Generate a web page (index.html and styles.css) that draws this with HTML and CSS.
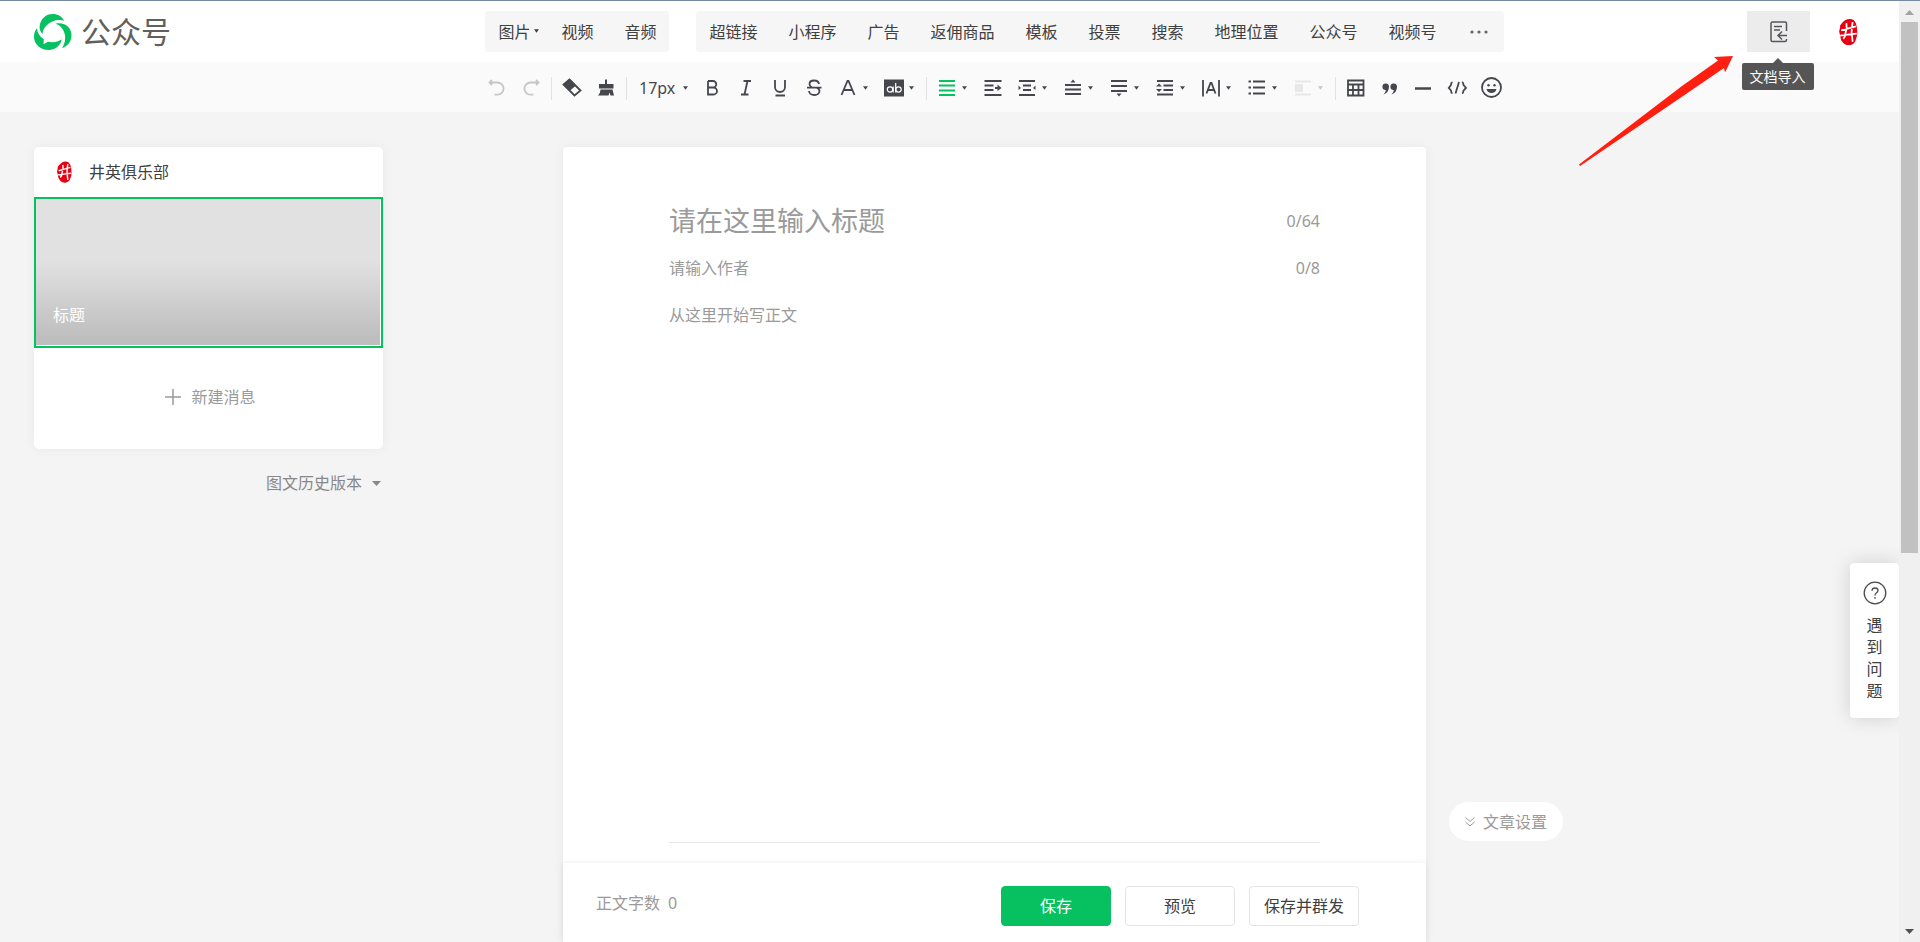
FILE: index.html
```html
<!DOCTYPE html>
<html lang="zh-CN">
<head>
  <meta charset="UTF-8">
  <meta name="viewport" content="width=device-width, initial-scale=1.0">
  <title>公众号</title>
  <link rel="stylesheet" href="styles.css">
</head>
<body>

  <!-- 公用图形 -->
  <svg class="defs" aria-hidden="true">
    <symbol id="arrow" viewBox="0 0 6 4"><path d="M0 0h6L3 4z" fill="currentColor"/></symbol>
    <symbol id="seal" viewBox="0 0 18 25">
      <path d="M6 1Q10-1 14 1Q17 4 17 8L17.500 13Q17.500 17 16 20Q15 24 11 25Q7 26 4 23Q1 20 1 16L0 12Q1 9 1 6Q3 3 6 1z" fill="#e60012"/>
      <path d="M7 4Q8 9 6 14Q6 17 4 19M13 3Q12 8 12 13L13 22M2 11L9 9L16 7M1 16L8 15L17 14" fill="none" stroke="#fff" stroke-width="1.7"/>
    </symbol>
  </svg>

  <div class="window">
    <div class="page">

      <!-- 顶部 -->
      <header class="header">
        <a href="#" class="brand">
          <svg width="38" height="36" viewBox="0 0 38 36" fill="#07c160">
            <path d="M8.500 20C6 17.500 5.200 14.500 5.700 11.500C7 4.500 12 0 18.500 0C24 0 28 2.600 30.200 6.700C27 5.600 22.500 5.700 18.500 7.500C12.500 10.200 9 14.500 8.500 20z"/>
            <path d="M21.500 9.700C30.500 7.500 37.500 13.500 37.500 21C37.500 27.500 34 32 28 34.200C30.500 30 31.700 26 31 21.500C30 15.500 26.500 11 21.500 9.700z"/>
            <path d="M3 14.200C3.200 18.500 5.500 22.500 9.800 25.200L9.500 30.200L14 27.700C19 28.700 24 28 27.700 25.300C26.500 32 21.500 36 14.500 36C6.500 36 0 30.500 0 22.500C0 19.200 1 16.500 3 14.200z"/>
          </svg>
          <span>公众号</span>
        </a>

        <nav class="nav">
          <div class="nav-group">
            <button type="button">图片<svg width="5" height="4"><use href="#arrow"/></svg></button>
            <button type="button">视频</button>
            <button type="button">音频</button>
          </div>
          <div class="nav-group">
            <button type="button">超链接</button>
            <button type="button">小程序</button>
            <button type="button">广告</button>
            <button type="button">返佣商品</button>
            <button type="button">模板</button>
            <button type="button">投票</button>
            <button type="button">搜索</button>
            <button type="button">地理位置</button>
            <button type="button">公众号</button>
            <button type="button">视频号</button>
            <button type="button" class="more" aria-label="更多">
              <svg width="18" height="4" viewBox="0 0 18 4" fill="#666"><circle cx="2" cy="2" r="1.600"/><circle cx="9" cy="2" r="1.600"/><circle cx="16" cy="2" r="1.600"/></svg>
            </button>
          </div>
        </nav>

        <div class="user">
          <div class="import">
            <button type="button" class="import-btn" aria-label="文档导入">
              <svg width="18" height="22" viewBox="0 0 18 22" fill="none" stroke="#55565c" stroke-width="1.500">
                <path d="M16.500 10V2.500Q16.500 1 15 1H2.500Q1 1 1 2.500V19Q1 20.500 2.500 20.500H15Q16.500 20.500 16.500 19V18M4 5.500h8M4 9h6M17 14.500H8.500M12 10.500L8 14.500L12 18.500"/>
              </svg>
            </button>
            <span class="tooltip">文档导入</span>
            <svg class="pointer" width="160" height="116" viewBox="0 0 160 116">
              <path d="M156 4L137 5L141 8.500L105 34L2 112.500L3 114L109 42L147 16L148 20.500z" fill="#ff1e10"/>
            </svg>
          </div>
          <svg class="avatar" width="19" height="26"><use href="#seal"/></svg>
        </div>
      </header>

      <!-- 编辑工具栏 -->
      <div class="toolbar">
        <button type="button" class="tool off" aria-label="撤销"><svg viewBox="0 0 20 20"><path d="M5 2L2.500 4.500L5 7M3 4.500H10.500A6 6 0 0 1 10.500 16.700H7.500"/></svg></button>
        <button type="button" class="tool off" aria-label="重做"><svg viewBox="0 0 20 20"><path d="M15 2L17.500 4.500L15 7M17 4.500H9.500A6 6 0 0 0 9.500 16.700H12.500"/></svg></button>
        <span class="sep"></span>
        <button type="button" class="tool" aria-label="清除格式"><svg viewBox="0 0 20 20"><path d="M7.500 1.500L18.500 12.500L12.500 17.500L1.500 6.500z"/><path class="solid" d="M7.500 1L14 7.500L7.500 13L1 6.500z"/></svg></button>
        <button type="button" class="tool" aria-label="格式刷"><svg viewBox="0 0 20 20"><path class="solid" d="M9 1.500h2V6h6.500v4.500H3V6h6zM4.500 11.500H16.500L18 17.500H14.500L13.500 14.500L12.500 17.500H2Q4.500 15 4.500 11.500z"/></svg></button>
        <span class="sep"></span>
        <div class="size">
          <select aria-label="字号"><option>17px</option></select>
          <svg class="caret"><use href="#arrow"/></svg>
        </div>
        <button type="button" class="tool" aria-label="加粗"><svg viewBox="0 0 20 20"><path d="M6 3H11A3 3 0 0 1 11 9.500H6M6 9.500H11.500A3.500 3.500 0 0 1 11.500 16.500H6V3"/></svg></button>
        <button type="button" class="tool" aria-label="斜体"><svg viewBox="0 0 20 20"><path d="M7.500 3H15M5 16.500H12.500M11.500 3L8.500 16.500"/></svg></button>
        <button type="button" class="tool" aria-label="下划线"><svg viewBox="0 0 20 20"><path d="M5 2V9A5 5 0 0 0 15 9V2M5.500 17.500H15"/></svg></button>
        <button type="button" class="tool" aria-label="删除线"><svg viewBox="0 0 20 20"><path d="M15 6Q14.500 2.500 10 2.500Q5.500 2.500 5.500 6Q5.500 8 8 9.500M3 9.700H17.500M13 10Q15.500 11 15.500 13Q15 17 10.500 17Q5.500 17 5 13"/></svg></button>
        <button type="button" class="tool drop" aria-label="字体颜色"><svg viewBox="0 0 20 20"><path d="M3.500 17L9.500 3H10.500L16.500 17M5.500 12H14.500"/></svg><svg class="caret"><use href="#arrow"/></svg></button>
        <button type="button" class="tool drop" aria-label="背景色"><svg viewBox="0 0 20 20"><path class="solid" d="M0 1.500h20v17H0z"/><g class="light"><circle cx="6" cy="11.500" r="2.700"/><path d="M9.200 8.500V14.500M11.700 5V14.500"/><circle cx="14.500" cy="11.500" r="2.700"/></g></svg><svg class="caret"><use href="#arrow"/></svg></button>
        <span class="sep"></span>
        <button type="button" class="tool drop" aria-label="对齐"><svg class="green" viewBox="0 0 20 20"><path d="M2 3h16M2 7.500h16M2 12.500h16M2 17h16"/></svg><svg class="caret"><use href="#arrow"/></svg></button>
        <button type="button" class="tool" aria-label="首行缩进"><svg viewBox="0 0 20 20"><path d="M1.500 3h17M1.500 7.500h9M1.500 12h9M1.500 17h17M12 10h4"/><path class="solid" d="M14.500 6.500L18.500 10L14.500 13z"/></svg></button>
        <button type="button" class="tool drop" aria-label="两端缩进"><svg viewBox="0 0 20 20"><path d="M2 3h16M6 7.500h8M6 12h8M2 17h16"/><path class="solid" d="M1.500 7.500L4 10L1.500 12zM18.500 7.500L16 10L18.500 12z"/></svg><svg class="caret"><use href="#arrow"/></svg></button>
        <button type="button" class="tool drop" aria-label="段前距"><svg viewBox="0 0 20 20"><path d="M2 7h16M2 11.500h16M2 16h16"/><path class="solid" d="M7.500 4.500h5L10 1.500z"/></svg><svg class="caret"><use href="#arrow"/></svg></button>
        <button type="button" class="tool drop" aria-label="段后距"><svg viewBox="0 0 20 20"><path d="M2 3h16M2 8h16M2 13h16"/><path class="solid" d="M7.500 15.500h5L10 18.500z"/></svg><svg class="caret"><use href="#arrow"/></svg></button>
        <button type="button" class="tool drop" aria-label="行间距"><svg viewBox="0 0 20 20"><path d="M2 3h16M8.500 7.500h9.500M8.500 12h9.500M2 16.500h16"/><path class="solid" d="M1 8.500L4 5.500L7 8.500zM1 11L4 14L7 11z"/></svg><svg class="caret"><use href="#arrow"/></svg></button>
        <button type="button" class="tool drop" aria-label="字间距"><svg viewBox="0 0 20 20"><path d="M2 2V18.500M18 2V18.500M5.500 15.500L9.500 5H10.500L14.500 15.500M7 12H13"/></svg><svg class="caret"><use href="#arrow"/></svg></button>
        <button type="button" class="tool drop" aria-label="列表"><svg viewBox="0 0 20 20"><path d="M6 3.500h12M6 9.500h12M6 15.500h12M1.500 3.500h2.500M1.500 9.500h2.500M1.500 15.500h2.500"/></svg><svg class="caret"><use href="#arrow"/></svg></button>
        <button type="button" class="tool drop off" aria-label="图文混排"><svg class="faint" viewBox="0 0 20 20"><path d="M2 3.500h16M2 16.500h16"/><path class="solid" d="M2 6h8v8H2z"/></svg><svg class="caret"><use href="#arrow"/></svg></button>
        <span class="sep"></span>
        <button type="button" class="tool" aria-label="表格"><svg viewBox="0 0 20 20"><path d="M2 2.500h15.500v15H2zM2 6.500h15.500M2 12h15.500M7 6.500v11M12.500 6.500v11"/></svg></button>
        <button type="button" class="tool" aria-label="引用"><svg viewBox="0 0 20 20"><path class="solid" d="M9 8.500Q9 14.500 3.500 16.500Q6 14 5.800 12A3.300 3.300 0 1 1 9 8.500zM17 8.500Q17 14.500 11.500 16.500Q14 14 13.800 12A3.300 3.300 0 1 1 17 8.500z"/></svg></button>
        <button type="button" class="tool" aria-label="分隔线"><svg viewBox="0 0 20 20"><path d="M1 10.500h16" stroke-width="2.500"/></svg></button>
        <button type="button" class="tool" aria-label="代码"><svg viewBox="0 0 20 20"><path d="M4.500 4Q3 4.500 3 7L.8 10L3 12.500Q3 15 4.500 15.500M14 4Q15.500 4.500 15.500 7L18 10L15.500 12.500Q15.500 15 14 15.500M11 4L7.500 15.500"/></svg></button>
        <button type="button" class="tool" aria-label="表情"><svg viewBox="0 0 20 20"><circle cx="9.500" cy="9.500" r="9.500"/><path class="solid" d="M4.500 11h10Q13.500 15 9.500 15Q5.500 15 4.500 11z"/><circle class="solid" cx="6.500" cy="7.200" r="1.200"/><circle class="solid" cx="12.500" cy="7.200" r="1.200"/></svg></button>
      </div>

      <main class="main">
        <!-- 消息列表 -->
        <aside class="side">
          <div class="card">
            <div class="account"><svg width="15" height="22"><use href="#seal"/></svg>井英俱乐部</div>
            <div class="cover"><div class="cover-img">标题</div></div>
            <button type="button" class="add">
              <svg width="16" height="16" viewBox="0 0 16 16" stroke="#9a9a9a" stroke-width="1.500"><path d="M8 0v16M0 8h16"/></svg>
              新建消息
            </button>
          </div>
          <button type="button" class="history">图文历史版本<svg width="9" height="5" viewBox="0 0 9 5"><path d="M0 0h9L4.500 5z" fill="#888"/></svg></button>
        </aside>

        <!-- 正文编辑 -->
        <section class="editor">
          <div class="fields">
            <div class="row title-row">
              <input type="text" aria-label="标题" placeholder="请在这里输入标题">
              <span>0/64</span>
            </div>
            <div class="row">
              <input type="text" aria-label="作者" placeholder="请输入作者">
              <span>0/8</span>
            </div>
            <textarea aria-label="正文" placeholder="从这里开始写正文"></textarea>
          </div>
          <footer class="actions">
            <p>正文字数<span>0</span></p>
            <button type="button" class="btn primary">保存</button>
            <button type="button" class="btn">预览</button>
            <button type="button" class="btn">保存并群发</button>
          </footer>
          <button type="button" class="settings">
            <svg width="10" height="10" viewBox="0 0 10 10" fill="none" stroke="#9a9a9a"><path d="M.5 .5L5 4.500L9.500 .5M.5 5L5 9L9.500 5"/></svg>
            文章设置
          </button>
        </section>
      </main>

      <button type="button" class="help">
        <svg width="24" height="24" viewBox="0 0 24 24" fill="none" stroke="#4c4c4c" stroke-width="1.300"><circle cx="12" cy="12" r="10.800"/><path d="M9 9.700Q9 7 12 7Q15 7 15 9.500Q15 11 13.300 12Q12 12.800 12 14.500M12 16v1.800"/></svg>
        <span>遇到问题</span>
      </button>
    </div>

    <!-- 滚动条 -->
    <div class="scrollbar">
      <svg width="9" height="5" viewBox="0 0 9 5"><path d="M0 5h9L4.500 0z" fill="#a3a3a3"/></svg>
      <div class="track"><div class="thumb"></div></div>
      <svg width="9" height="5" viewBox="0 0 9 5"><path d="M0 0h9L4.500 5z" fill="#505050"/></svg>
    </div>
  </div>

</body>
</html>
```

FILE: styles.css
```css
* {
  box-sizing: border-box;
}

body {
  margin: 0;
  font-family: "Noto Sans", "Noto Sans CJK SC", sans-serif;
  font-size: 16px;
  line-height: 24px;
  color: #404040;
  background-color: #f4f4f4;
}

button, input, textarea, select {
  font: inherit;
  color: inherit;
  border: none;
  background: none;
  padding: 0;
  margin: 0;
}

button {
  cursor: pointer;
}

.defs {
  position: absolute;
  width: 0;
  height: 0;
}

.window {
  display: flex;
  height: 100vh;
  border-top: 1px solid #758ba3;
}

.page {
  position: relative;
  flex: 1;
  min-width: 0;
  display: flex;
  flex-direction: column;
  overflow: hidden;
}

/* 顶部 */
.header {
  display: grid;
  grid-template-columns: 90px 1fr auto 1fr;
  align-items: center;
  height: 61px;
  background-color: #fff;
}

.brand {
  grid-column: 1 / 3;
  display: flex;
  align-items: center;
  gap: 9px;
  padding-left: 34px;
  font-size: 30px;
  line-height: 40px;
  color: #606060;
  text-decoration: none;
}

.nav {
  display: flex;
  gap: 27px;
}

.nav-group {
  display: flex;
  gap: 31px;
  height: 41px;
  padding: 0 13px;
  border-radius: 3px;
  background-color: #f6f6f6;
}

.nav-group button {
  position: relative;
  white-space: nowrap;
}

.nav-group button svg {
  position: absolute;
  left: 100%;
  top: 18px;
  margin-left: 4px;
}

.nav-group .more {
  display: flex;
  align-items: center;
}

.nav-group .more svg {
  position: static;
  margin: 0 3px 0 2px;
}

.user {
  display: flex;
  justify-content: flex-end;
  align-items: center;
  gap: 29px;
  padding-right: 41px;
}

.import {
  position: relative;
}

.import-btn {
  display: flex;
  align-items: center;
  justify-content: center;
  width: 63px;
  height: 41px;
  background-color: #ececec;
}

.tooltip {
  position: absolute;
  z-index: 2;
  left: 50%;
  top: 52px;
  width: 72px;
  margin-left: -37px;
  border-radius: 2px;
  background-color: #555;
  color: #fff;
  font-size: 14px;
  line-height: 27px;
  text-align: center;
}

.tooltip::before {
  content: "";
  position: absolute;
  left: 31px;
  bottom: 100%;
  border: 5px solid transparent;
  border-top: none;
  border-bottom-color: #555;
}

.pointer {
  position: absolute;
  z-index: 2;
  left: -170px;
  top: 41px;
}

/* 工具栏 */
.toolbar {
  display: flex;
  justify-content: center;
  align-items: center;
  height: 50px;
  padding: 2px 0 0 90px;
  background-color: #fafafa;
  color: #46474d;
}

.tool {
  display: flex;
  align-items: center;
  flex: none;
  width: 34px;
  height: 34px;
  padding-left: 7px;
}

.tool svg {
  width: 20px;
  height: 20px;
  fill: none;
  stroke: currentColor;
  stroke-width: 1.8;
  overflow: visible;
}

.tool .solid {
  fill: currentColor;
  stroke: none;
}

.tool .light {
  stroke: #fff;
  stroke-width: 1.2;
}

.tool .green {
  color: #07c160;
}

.tool.drop {
  width: 46px;
  gap: 5px;
}

.toolbar .caret {
  width: 5px;
  height: 4px;
  stroke: none;
}

.off {
  color: #c6c6c6;
}

.faint {
  color: #e8e8e8;
}

.sep {
  flex: none;
  width: 1px;
  height: 23px;
  margin: 0 3px;
  background-color: #e2e2e4;
}

.size {
  display: flex;
  align-items: center;
  width: 65px;
  padding-left: 9px;
}

.size select {
  width: 44px;
  appearance: none;
}

/* 内容区 */
.main {
  flex: 1;
  display: grid;
  grid-template-columns: 90px 1fr minmax(0, 863px) 1fr;
  padding-top: 35px;
}

.side {
  grid-column: 1 / 3;
  width: 383px;
  padding-left: 34px;
}

.card {
  border-radius: 5px;
  background-color: #fff;
  box-shadow: 0 0 12px rgba(0, 0, 0, 0.05);
}

.account {
  display: flex;
  align-items: center;
  gap: 17px;
  height: 50px;
  padding-left: 23px;
}

.cover {
  height: 151px;
  padding: 0 1px 1px 0;
  border: 2px solid #07c160;
}

.cover-img {
  height: 100%;
  padding: 104px 17px 0;
  background: linear-gradient(#e1e1e1 43%, #bebebe 95%);
  color: #fff;
}

.add {
  display: flex;
  justify-content: center;
  align-items: center;
  gap: 10px;
  width: 100%;
  height: 101px;
  padding: 0 0 4px 4px;
  color: #9a9a9a;
}

.history {
  display: flex;
  align-items: center;
  gap: 10px;
  margin: 22px 2px 0 auto;
  color: #888;
}

/* 编辑区 */
.editor {
  position: relative;
  display: flex;
  flex-direction: column;
  border-radius: 4px 4px 0 0;
  background-color: #fff;
  box-shadow: 0 0 12px rgba(0, 0, 0, 0.05);
}

.fields {
  flex: 1;
  display: flex;
  flex-direction: column;
  margin: 50px 106px 20px;
  border-bottom: 1px solid #e7e7e8;
  color: #9a9a9a;
}

.row {
  display: flex;
  align-items: center;
  height: 47px;
}

.row input {
  flex: 1;
  min-width: 0;
}

.title-row input {
  font-size: 27px;
  line-height: 40px;
}

.fields textarea {
  flex: 1;
  margin-top: 12px;
  resize: none;
}

::placeholder {
  color: #9a9a9a;
  opacity: 1;
}

input:focus, textarea:focus, select:focus {
  outline: none;
}

.actions {
  display: flex;
  align-items: flex-start;
  gap: 14px;
  height: 79px;
  padding: 23px 67px 0 33px;
  box-shadow: 0 0 6px rgba(0, 0, 0, 0.08);
}

.actions p {
  flex: 1;
  margin: 5px 0 0;
  color: #9a9a9a;
}

.actions p span {
  margin-left: 8px;
}

.btn {
  width: 110px;
  height: 40px;
  border: 1px solid #e4e4e8;
  border-radius: 4px;
}

.btn.primary {
  border-color: #07c160;
  background-color: #07c160;
  color: #fff;
}

.settings {
  position: absolute;
  left: 100%;
  bottom: 101px;
  display: flex;
  align-items: center;
  gap: 8px;
  height: 39px;
  margin-left: 23px;
  padding: 0 16px;
  border-radius: 20px;
  background-color: #fff;
  color: #9a9a9a;
  white-space: nowrap;
}

/* 帮助浮窗 */
.help {
  position: absolute;
  right: 0;
  bottom: 224px;
  display: flex;
  flex-direction: column;
  align-items: center;
  gap: 9px;
  width: 49px;
  padding: 18px 16px 16px;
  border-radius: 4px;
  background-color: #fff;
  box-shadow: 0 0 20px rgba(0, 0, 0, 0.15);
}

.help span {
  width: 16px;
  line-height: 22px;
}

/* 滚动条 */
.scrollbar {
  display: flex;
  flex-direction: column;
  align-items: center;
  gap: 7px;
  width: 21px;
  padding: 9px 2px 8px;
  background-color: #f0f0f0;
}

.track {
  flex: 1;
  width: 100%;
}

.thumb {
  height: 59%;
  background-color: #c1c1c1;
}
```
